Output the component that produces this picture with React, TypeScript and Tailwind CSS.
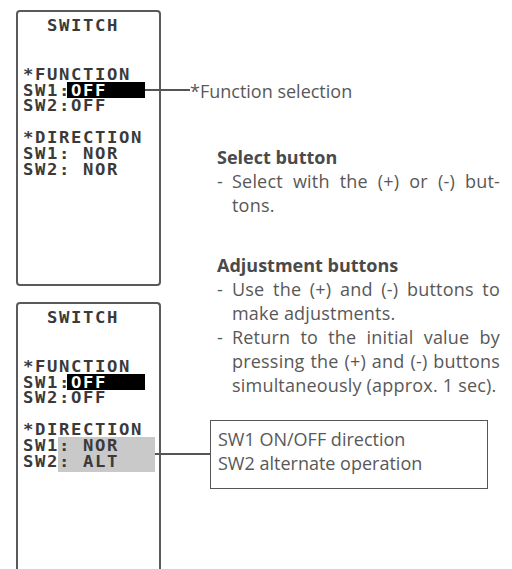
const mono = "font-['DejaVu_Sans_Mono',monospace] text-[15px] tracking-[1.4px] font-bold text-[#3a3a3a]";
const sans = "font-['Open_Sans',sans-serif] text-[18px] tracking-[0.2px] text-[#585858]";

function Row({ h = 15, white, children }: { h?: number; white?: boolean; children: React.ReactNode }) {
  return (
    <div className={`relative flex items-center whitespace-pre ${h === 16 ? "h-[16px]" : "h-[15px]"}`}>
      <span className="inline-block origin-left scale-x-[1.15]">{children}</span>
    </div>
  );
}

function Screen({ lower }: { lower?: boolean }) {
  return (
    <div
      className={`relative shrink-0 w-[145px] border-2 border-[#5a5a5a] rounded-[4px] pl-[5px] pt-[6px] ${mono} ${
        lower ? "h-[280px] rounded-b-none border-b-0" : "h-[276px]"
      }`}
    >
      {/* black cursor on SW1 of *FUNCTION */}
      <div className="absolute left-[49px] top-[70px] w-[78px] h-[16px] bg-black" />
      {!lower && <div className="absolute left-[127px] top-[77px] w-[45px] h-[1.5px] bg-[#555]" />}
      {lower && (
        <>
          <div className="absolute left-[40px] top-[133px] w-[97px] h-[35px] bg-[#c9c9c9]" />
          <div className="absolute left-[137px] top-[149px] w-[55px] h-[1.5px] bg-[#555]" />
        </>
      )}

      <Row h={16}>{"  SWITCH"}</Row>
      <div className="mt-[34px]">
        <Row>*FUNCTION</Row>
        <Row h={16}>
          SW1:<span className="text-white">OFF</span>
        </Row>
        <Row>SW2:OFF</Row>
      </div>
      <div className="mt-[16px]">
        <Row h={16}>*DIRECTION</Row>
        <Row h={16}>{"SW1: NOR"}</Row>
        <Row h={16}>{lower ? "SW2: ALT" : "SW2: NOR"}</Row>
      </div>
    </div>
  );
}

function Item({ children, dash }: { children: React.ReactNode; dash?: boolean }) {
  return (
    <div className="flex h-[24px] leading-[24px]">
      <span className="w-[15px] shrink-0">{dash ? "-" : ""}</span>
      <span className="flex-1 text-justify [text-align-last:justify]">{children}</span>
    </div>
  );
}

function Plain({ children }: { children: React.ReactNode }) {
  return (
    <div className="flex h-[24px] leading-[24px]">
      <span className="w-[15px] shrink-0" />
      <span className="flex-1 whitespace-nowrap">{children}</span>
    </div>
  );
}

export default function App() {
  return (
    <div className="w-[512px] h-[569px] bg-white overflow-hidden flex">
      <div className="pl-[16px] pt-[10px] flex flex-col gap-[16px] shrink-0">
        <Screen />
        <Screen lower />
      </div>
      <div className={`flex-1 flex flex-col pr-[12px] ${sans}`}>
        <div className="mt-[79px] h-[24px] leading-[24px] pl-[29px] tracking-normal">*Function selection</div>

        <div className="mt-[42px] pl-[56px]">
          <div className="h-[24px] leading-[24px] font-bold tracking-normal text-[#4a4a4a]">Select button</div>
          <Item dash>Select with the (+) or (-) but-</Item>
          <Plain>tons.</Plain>
        </div>

        <div className="mt-[36px] pl-[56px]">
          <div className="h-[24px] leading-[24px] font-bold tracking-normal text-[#4a4a4a]">Adjustment buttons</div>
          <Item dash>Use the (+) and (-) buttons to</Item>
          <Plain>make adjustments.</Plain>
          <Item dash>Return to the initial value by</Item>
          <Item>pressing the (+) and (-) buttons</Item>
          <Plain>simultaneously (approx. 1 sec).</Plain>
        </div>

        <div className="mt-[23px] ml-[49px] w-[278px] h-[69px] border-[1.5px] border-[#555] pl-[7px] pt-[6px] tracking-normal">
          <div className="h-[24px] leading-[24px]">SW1 ON/OFF direction</div>
          <div className="h-[24px] leading-[24px]">SW2 alternate operation</div>
        </div>
      </div>
    </div>
  );
}
